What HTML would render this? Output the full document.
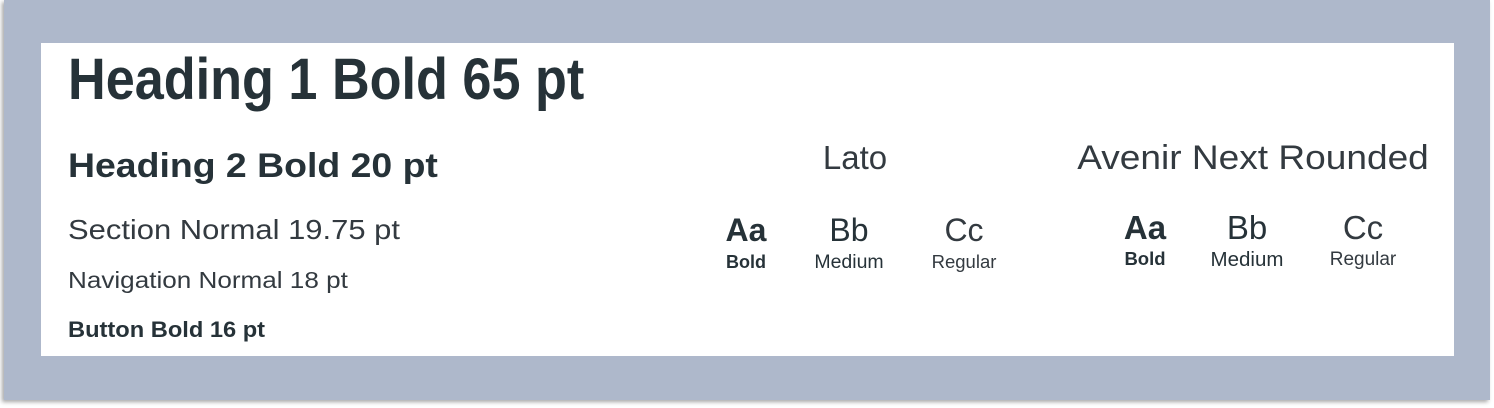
<!DOCTYPE html>
<html><head><meta charset="utf-8"><style>
html,body{margin:0;padding:0;width:1494px;height:408px;background:#fff;overflow:hidden}
.outer{position:absolute;left:4px;top:0;width:1486px;height:400px;background:#aeb8cb;box-shadow:-2px 2px 4px rgba(0,0,0,.35)}
.card{position:absolute;left:41px;top:43px;width:1413px;height:313px;background:#fff}
.t{position:absolute;line-height:1;white-space:nowrap;font-family:"Liberation Sans",sans-serif;color:#263238;transform-origin:left}
.c{transform:translateX(-50%)}
.b{font-weight:bold}
.l{color:#333a40}
</style></head><body>
<div class="outer"></div>
<div class="card"></div>
<div class="t b" style="left:68px;top:51px;font-size:58px;transform:scaleX(0.9)">Heading 1 Bold 65 pt</div>
<div class="t b" style="left:68px;top:149px;font-size:34px;transform:scaleX(1.1)">Heading 2 Bold 20 pt</div>
<div class="t l" style="left:68px;top:216px;font-size:28px;transform:scaleX(1.105)">Section Normal 19.75 pt</div>
<div class="t l" style="left:68px;top:269px;font-size:23.5px;transform:scaleX(1.11)">Navigation Normal 18 pt</div>
<div class="t b" style="left:68px;top:319px;font-size:22px;transform:scaleX(1.075)">Button Bold 16 pt</div>

<div class="t c l" style="left:855px;top:141px;font-size:33px">Lato</div>
<div class="t c l" style="left:1253px;top:141px;font-size:34px;transform:translateX(-50%) scaleX(1.09);transform-origin:center">Avenir Next Rounded</div>

<div class="t c b" style="left:746px;top:214px;font-size:32px">Aa</div>
<div class="t c" style="left:849px;top:214px;font-size:32px">Bb</div>
<div class="t c l" style="left:964px;top:214px;font-size:32px">Cc</div>
<div class="t c b" style="left:746px;top:253px;font-size:18px">Bold</div>
<div class="t c" style="left:849px;top:253px;font-size:19.5px">Medium</div>
<div class="t c l" style="left:964px;top:253px;font-size:18.5px">Regular</div>

<div class="t c b" style="left:1145px;top:211px;font-size:33px">Aa</div>
<div class="t c" style="left:1247px;top:211px;font-size:33px">Bb</div>
<div class="t c l" style="left:1363px;top:211px;font-size:33px">Cc</div>
<div class="t c b" style="left:1145px;top:250px;font-size:18.5px">Bold</div>
<div class="t c" style="left:1247px;top:250px;font-size:20.5px">Medium</div>
<div class="t c l" style="left:1363px;top:250px;font-size:19px">Regular</div>
</body></html>
